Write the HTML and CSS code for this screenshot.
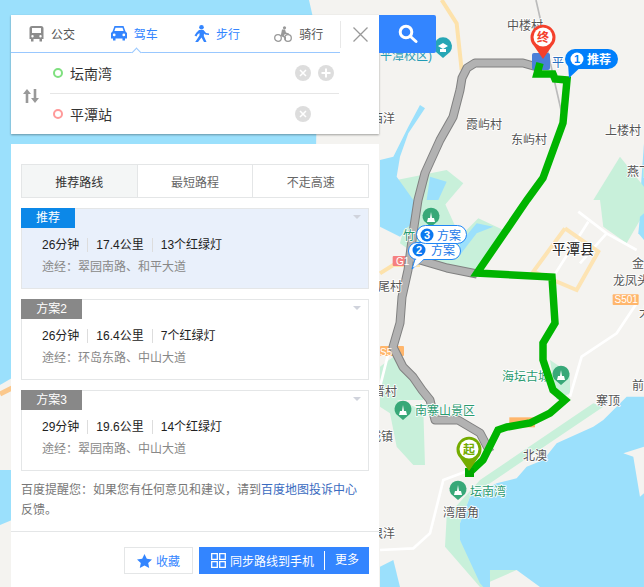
FILE: index.html
```html
<!DOCTYPE html>
<html lang="zh-CN">
<head>
    <meta charset="UTF-8">
    <title>百度地图 路线</title>
    <link rel="stylesheet" href="styles.css">
</head>
<body>
    <!-- Map canvas -->
    <svg class="map" width="644" height="587" viewBox="0 0 644 587">
        <rect width="644" height="587" fill="#f4f3f0"/>
        <!-- water left of the panel -->
        <path class="water" d="M0 0H309L318 40 316 150 300 210 0 385ZM0 470 11 465 60 500 0 525Z"/>
        <path class="land" d="M0 385 30 378 40 470 0 470Z"/>
        <path d="M0 394 12 388" stroke="#fbc88c" stroke-width="5" fill="none"/>

        <!-- upper map, zoom coords -->
        <g transform="translate(380,0) scale(.3333)">
            <path class="park" d="M50 540 200 510 250 550 190 620 110 620 60 600Z"/>
            <path class="water" d="M120 315 135 325 85 400 60 470 50 530 100 600 0 600 0 480 40 470 85 380Z"/>
            <path class="water" d="M150 530 200 545 175 600 140 600Z"/>
            <path class="water" d="M792 430 780 600 792 600Z"/>
            <path class="park" d="M720 470 792 560 792 600 640 600Z"/>
            <path class="road-peach" d="M185 0 230 70 245 210"/>
            <path class="rail" d="M468 0 550 360"/>
        </g>

        <!-- middle map, zoom coords -->
        <g transform="translate(380,200) scale(.3333)">
            <path class="water" d="M0 0H110L100 70 60 110 0 80Z"/>
            <path class="park" d="M125 0H190L240 110 295 55 370 90 290 210 130 180 60 130 70 90 100 70Z"/>
            <path class="water" d="M240 130 290 70 340 80 290 100 240 165Z"/>
            <path class="park" d="M660 0H792V40L740 130 670 80Z"/>
            <path class="water" d="M780 50 792 40V120L775 100Z"/>
            <path class="park" d="M0 500 40 470 130 590V600H0Z"/>
            <path class="park" d="M510 480 570 520 570 580 530 600Z"/>
            <path class="road-white" d="M595 35 680 100 770 150M625 65 520 230M680 100 600 190M770 310 710 400 605 470 570 590M30 440 0 560"/>
            <path class="road-ring" d="M555 85 655 155 590 270 460 215 555 85"/>
            <path class="road-peach" d="M0 220 40 195 120 195"/>
            <rect x="38" y="168" width="58" height="30" rx="3" fill="#f58080"/>
            <rect x="698" y="283" width="78" height="32" rx="3" fill="#ffb66c"/>
            <rect x="0" y="438" width="72" height="30" rx="3" fill="#ffb66c"/>
        </g>

        <!-- lower map, zoom coords -->
        <g transform="translate(380,390) scale(.3333)">
            <path class="park" d="M0 30 50 30 130 60 135 225 100 225 50 170 30 70 0 50Z"/>
            <path class="park" d="M670 50 640 40 300 270 200 380 195 470 300 591 330 591 240 450 240 400 270 320Z"/>
            <path class="water" d="M792 20 740 20 670 90 640 110 530 160 490 210 440 230 410 265 350 280 270 320 240 400 240 450 300 580 310 591H792Z"/>
            <path class="land" d="M730 190 760 200 780 320 792 310V170ZM330 540 410 540 480 591H330Z"/>
            <path class="park" d="M330 540 410 540 330 575Z"/>
            <path class="water" d="M0 530 40 510 60 591H0Z"/>
            <path class="road-white" d="M270 240 190 270 150 430 100 475 0 480"/>
            <rect x="388" y="82" width="77" height="30" fill="#ffb66c"/>
        </g>

        <!-- alternative routes -->
        <path class="route-edge" d="M537 67 523 63H475L467 68 462 78 460 90 453 117 440 140 425 173 418 200 413 233 408 270 402 297 400 323 393 347 403 367 413 377 422 390 430 400 435 420H458L480 433 490 452"/>
        <path class="route-edge" d="M413 258 447 268 477 274"/>
        <path class="route-alt" d="M537 67 523 63H475L467 68 462 78 460 90 453 117 440 140 425 173 418 200 413 233 408 270 402 297 400 323 393 347 403 367 413 377 422 390 430 400 435 420H458L480 433 490 452"/>
        <path class="route-alt" d="M413 258 447 268 477 274"/>

        <!-- map labels -->
        <text class="lbl" x="507" y="30">中楼村</text>
        <text class="lbl" x="466" y="129">霞屿村</text>
        <text class="lbl" x="511" y="144">东屿村</text>
        <text class="lbl" x="605" y="135">上楼村</text>
        <text class="lbl" x="627" y="176">燕下</text>
        <text class="lbl" x="371" y="123">西洋</text>
        <text class="lbl" x="632" y="268">金</text>
        <text class="lbl" x="613" y="285">龙凤头</text>
        <text class="lbl" x="639" y="317">大</text>
        <text class="lbl" x="632" y="390">前</text>
        <text class="lbl" x="596" y="405">寨顶</text>
        <text class="lbl" x="523" y="460">北澳</text>
        <text class="lbl" x="443" y="517">湾厝角</text>
        <text class="lbl" x="369" y="441">城镇</text>
        <text class="lbl" x="371" y="538">垠洋</text>
        <text class="lbl" x="373" y="396">晋村</text>
        <text class="lbl" x="366" y="291">黑尾村</text>
        <text class="lbl-city" x="552" y="254">平潭县</text>
        <text class="lbl-poi" x="502" y="381">海坛古城</text>
        <text class="lbl-poi" x="415" y="415">南寨山景区</text>
        <text class="lbl-poi" x="470" y="496">坛南湾</text>
        <text class="lbl-poi" x="403" y="240">竹</text>
        <text class="lbl-school" x="380" y="60">平潭校区)</text>
        <text class="lbl-blue" x="552" y="67">平</text>
        <text class="lbl-shield" x="614.500" y="303">S501</text>
        <text class="lbl-shield" x="380" y="356">S5</text>
        <text class="lbl-shield" x="396" y="265">G1</text>

        <!-- poi pins -->
        <g class="pin-green">
            <path d="M431 227 424 221A8.500 8.500 0 1 1 438 221Z"/>
            <path d="M561 385 554 379A8.500 8.500 0 1 1 568 379Z"/>
            <path d="M403 420 396 414A8.500 8.500 0 1 1 410 414Z"/>
            <path d="M458 500 451 494A8.500 8.500 0 1 1 465 494Z"/>
        </g>
        <g fill="#fff">
            <path d="M427 222H435L434 218H432L431 212 430 218H428Z"/>
            <path d="M557 380H565L564 376H562L561 370 560 376H558Z"/>
            <path d="M399 415H407L406 411H404L403 405 402 411H400Z"/>
            <path d="M454 495H462L461 491H459L458 485 457 491H455Z"/>
        </g>
        <path d="M443 58 436 52A9 9 0 1 1 450 52Z" fill="#26a6b5"/>
        <path d="M438 46 443 43 448 46 443 49ZM440 49H446V52H440Z" fill="#fff"/>

        <!-- subway stop under the end pin -->
        <rect x="532" y="53" width="18" height="17" rx="2" fill="#4a7fd8"/>

        <!-- main route -->
        <path class="route-main" d="M469 473 483 460 498 430 507 427 530 423 550 413 565 400 553 390 543 360V343L555 323 552 277 477 273 527 200 543 178 563 123 567 80 555 79 553 74 537 74 540 63"/>
        <rect x="465" y="468" width="9" height="9" fill="#00a800"/>

        <!-- start and end pins -->
        <path d="M469 471 460 458A12.500 12.500 0 1 1 478 458Z" fill="#74ac00"/>
        <circle cx="469" cy="449" r="9.500" fill="#fff"/>
        <text class="pin-text pin-start" x="469" y="454">起</text>
        <path d="M543 59 534 46A12.500 12.500 0 1 1 552 46Z" fill="#f4402c"/>
        <circle cx="543" cy="37" r="9.500" fill="#fff"/>
        <text class="pin-text pin-end" x="543" y="42">终</text>

        <!-- route badges -->
        <path d="M412 269 416 256H428Z" fill="#fff" stroke="#1f86f5"/>
        <rect x="408.500" y="242.500" width="52" height="17" rx="8.500" fill="#fff" stroke="#1f86f5"/>
        <path d="M414 268 417 256H427Z" fill="#fff"/>
        <circle cx="419" cy="250" r="6.500" fill="#0a78f0"/>
        <text class="badge-num" x="419" y="254">2</text>
        <text class="badge-txt" x="431" y="255">方案</text>
        <rect x="416.500" y="225.500" width="50" height="18" rx="9" fill="#fff" stroke="#1f86f5"/>
        <circle cx="427" cy="235" r="6.500" fill="#0a78f0"/>
        <text class="badge-num" x="427" y="239">3</text>
        <text class="badge-txt" x="437" y="240">方案</text>

        <path d="M569 78 568 64H584Z" fill="#007ffb"/>
        <rect x="565" y="49" width="53" height="20" rx="10" fill="#007ffb"/>
        <circle cx="577" cy="59" r="6.500" fill="#fff"/>
        <text class="badge-num badge-num-main" x="577" y="63">1</text>
        <text class="badge-txt badge-txt-main" x="587" y="64">推荐</text>
    </svg>

    <div class="side">
        <!-- Search box -->
        <div class="search">
            <div class="search-card">
                <div class="mode-bar">
                    <div class="modes">
                        <div class="mode">
                            <svg width="15" height="16" viewBox="0 0 15 16"><path fill="#8c8c8c" fill-rule="evenodd" d="M3 0H12A2.500 2.500 0 0 1 14.500 2.500V13H13V15.500H10.500V13H4.500V15.500H2V13H.500V2.500A2.500 2.500 0 0 1 3 0ZM3 2V7H12V2ZM3.500 9A1.200 1.200 0 1 0 3.500 11.400 1.200 1.200 0 0 0 3.500 9ZM11.500 9A1.200 1.200 0 1 0 11.500 11.400 1.200 1.200 0 0 0 11.500 9Z"/></svg>
                            <span>公交</span>
                        </div>
                        <div class="mode active">
                            <svg width="16" height="15" viewBox="0 0 16 15"><path fill="#3385ff" fill-rule="evenodd" d="M3.500 0H12.500L14.500 5.500 16 7V12.500H14V14.500H11.500V12.500H4.500V14.500H2V12.500H0V7L1.500 5.500ZM4.500 1.800 3.400 5H12.600L11.500 1.800ZM3.200 7.500A1.400 1.400 0 1 0 3.200 10.300 1.400 1.400 0 0 0 3.200 7.500ZM12.800 7.500A1.400 1.400 0 1 0 12.800 10.300 1.400 1.400 0 0 0 12.800 7.500Z"/></svg>
                            <span>驾车</span>
                        </div>
                        <div class="mode active">
                            <svg width="16" height="17" viewBox="0 0 16 17"><circle cx="8.500" cy="2.300" r="2.300" fill="#3385ff"/><path fill="#3385ff" d="M6 5H10.500L13 8 16 8.500V10L12 9.500 11 8.500 10.800 11 13.500 17H11L8.500 12.500 5 17H2.200L6.500 10.500V8L4.500 9.500 3.500 11.500 1.500 10.500 3.500 7.500Z"/></svg>
                            <span>步行</span>
                        </div>
                        <div class="mode">
                            <svg width="18" height="16" viewBox="0 0 18 16"><g fill="none" stroke="#999" stroke-width="1.300"><circle cx="4" cy="12" r="3.300"/><circle cx="14" cy="12" r="3.300"/></g><circle cx="10.500" cy="1.800" r="1.600" fill="#999"/><path fill="#999" d="M8 3.500H11L12 6.500 15 7.500V8.800L11 8 9.800 9.500 12 11V14H10.800V12L7 10V8.500Z"/></svg>
                            <span>骑行</span>
                        </div>
                        <i class="mode-notch"></i>
                    </div>
                    <div class="close">
                        <svg width="15" height="15" viewBox="0 0 15 15"><path d="M.5.500 14.500 14.500M14.500.500.5 14.500" stroke="#999" stroke-width="1.300" fill="none"/></svg>
                    </div>
                </div>
                <div class="route-form">
                    <div class="swap">
                        <svg width="16" height="14" viewBox="0 0 16 14"><path fill="#999" d="M4 0 8 5H5.300V14H2.700V5H0ZM12 14 8 9H10.700V0H13.300V9H16Z"/></svg>
                    </div>
                    <div class="fields">
                        <div class="field">
                            <i class="dot dot-start"></i>
                            <span class="field-text">坛南湾</span>
                            <svg class="clear" width="16" height="16" viewBox="0 0 16 16"><circle cx="8" cy="8" r="8" fill="#ddd"/><path d="M5 5 11 11M11 5 5 11" stroke="#fff" stroke-width="1.500"/></svg>
                            <svg width="16" height="16" viewBox="0 0 16 16"><circle cx="8" cy="8" r="8" fill="#ddd"/><path d="M8 3.500V12.500M3.500 8H12.500" stroke="#fff" stroke-width="2"/></svg>
                        </div>
                        <div class="field">
                            <i class="dot dot-end"></i>
                            <span class="field-text">平潭站</span>
                            <svg class="clear clear-last" width="16" height="16" viewBox="0 0 16 16"><circle cx="8" cy="8" r="8" fill="#ddd"/><path d="M5 5 11 11M11 5 5 11" stroke="#fff" stroke-width="1.500"/></svg>
                        </div>
                    </div>
                </div>
            </div>
            <div class="search-btn">
                <svg width="20" height="20" viewBox="0 0 20 20"><circle cx="8" cy="8" r="5.800" fill="none" stroke="#fff" stroke-width="3"/><path d="M12.500 12.500 18 17.500" stroke="#fff" stroke-width="3" stroke-linecap="round"/></svg>
            </div>
        </div>

        <!-- Route results -->
        <div class="results">
            <div class="sort-tabs">
                <div class="sort-tab current">推荐路线</div>
                <div class="sort-tab">最短路程</div>
                <div class="sort-tab">不走高速</div>
            </div>

            <div class="plan selected">
                <div class="plan-tag tag-main">推荐</div>
                <i class="plan-arrow"></i>
                <div class="plan-stats">
                    <span class="stat">26分钟</span>
                    <span class="stat">17.4公里</span>
                    <span class="stat">13个红绿灯</span>
                </div>
                <div class="plan-via">途经：翠园南路、和平大道</div>
            </div>

            <div class="plan">
                <div class="plan-tag">方案2</div>
                <i class="plan-arrow"></i>
                <div class="plan-stats">
                    <span class="stat">26分钟</span>
                    <span class="stat">16.4公里</span>
                    <span class="stat">7个红绿灯</span>
                </div>
                <div class="plan-via">途经：环岛东路、中山大道</div>
            </div>

            <div class="plan">
                <div class="plan-tag">方案3</div>
                <i class="plan-arrow"></i>
                <div class="plan-stats">
                    <span class="stat">29分钟</span>
                    <span class="stat">19.6公里</span>
                    <span class="stat">14个红绿灯</span>
                </div>
                <div class="plan-via">途经：翠园南路、中山大道</div>
            </div>

            <p class="tips">百度提醒您：如果您有任何意见和建议，请到<a class="tips-link">百度地图投诉中心</a>反馈。</p>

            <div class="actions">
                <div class="btn-fav">
                    <svg width="15" height="14" viewBox="0 0 15 14"><path fill="#3385ff" d="M7.500 0 9.800 4.800 15 5.400 11.200 9 12.200 14 7.500 11.500 2.800 14 3.800 9 0 5.400 5.200 4.800Z"/></svg>
                    <span>收藏</span>
                </div>
                <div class="btn-sync">
                    <svg width="15" height="15" viewBox="0 0 15 15"><path fill="none" stroke="#fff" stroke-width="1.300" d="M.7.700H6.300V6.300H.7ZM8.700.700H14.300V6.300H8.700ZM.7 8.700H6.300V14.300H.7ZM8.700 8.700H14.300V14.300H8.700Z"/></svg>
                    <span class="sync-text">同步路线到手机</span>
                    <span class="sync-more">更多</span>
                </div>
            </div>
        </div>
    </div>
</body>
</html>
```

FILE: styles.css
```css
html, body {
    margin: 0;
    height: 100%;
    overflow: hidden;
}
body {
    position: relative;
    width: 644px;
    height: 587px;
    font-family: "Liberation Sans", "Noto Sans CJK SC", sans-serif;
    font-size: 12px;
    color: #333;
}

/* map */
.map {
    position: absolute;
    left: 0;
    top: 0;
    font-family: "Liberation Sans", "Noto Sans CJK SC", sans-serif;
}
.water { fill: #9be0fc; }
.land { fill: #f4f3f0; }
.park { fill: #c8f0da; }
.road-peach { fill: none; stroke: #fde2ab; stroke-width: 12; }
.road-ring { fill: none; stroke: #fde4b4; stroke-width: 12; }
.road-white { fill: none; stroke: #fff; stroke-width: 8; }
.rail { fill: none; stroke: #bbb; stroke-width: 5; }
.route-edge { fill: none; stroke: #808080; stroke-width: 9; stroke-linejoin: round; }
.route-alt { fill: none; stroke: #b2b2b2; stroke-width: 7; stroke-linejoin: round; }
.route-main { fill: none; stroke: #00b400; stroke-width: 7.500; stroke-linejoin: miter; stroke-miterlimit: 3; }
.pin-green { fill: #38a878; }

.lbl { font-size: 12px; fill: #555; stroke: #fff; stroke-width: 1.500px; paint-order: stroke; }
.lbl-city { font-size: 14px; fill: #222; stroke: #fff; stroke-width: 2px; paint-order: stroke; }
.lbl-poi { font-size: 12px; fill: #2a9a70; stroke: #fff; stroke-width: 1.500px; paint-order: stroke; }
.lbl-school { font-size: 12px; fill: #1f9bb5; }
.lbl-blue { font-size: 12px; fill: #2a6fc0; stroke: #fff; stroke-width: 2px; paint-order: stroke; }
.lbl-shield { font-size: 10px; fill: #fff; }

.pin-text { font-size: 12px; font-weight: bold; text-anchor: middle; }
.pin-start { fill: #74ac00; }
.pin-end { fill: #f4402c; }
.badge-num { font-size: 11px; font-weight: bold; fill: #fff; text-anchor: middle; }
.badge-num-main { fill: #007ffb; }
.badge-txt { font-size: 12px; fill: #1a78e8; }
.badge-txt-main { fill: #fff; font-weight: bold; }

/* left column */
.side {
    position: absolute;
    left: 11px;
    top: 15px;
    bottom: 0;
    width: 368px;
    display: flex;
    flex-direction: column;
    gap: 10px;
}

/* search box */
.search {
    position: relative;
}
.search-card {
    background: #fff;
    box-shadow: 0 1px 2px rgba(0, 0, 0, .35);
}
.search-btn {
    position: absolute;
    left: 368px;
    top: 0;
    width: 57px;
    height: 38px;
    background: #3385ff;
    border-radius: 0 2px 2px 0;
    display: flex;
    align-items: center;
    justify-content: center;
}
.mode-bar {
    display: flex;
}
.modes {
    position: relative;
    width: 329px;
    height: 37px;
    display: flex;
    border-bottom: 1px solid #99c8ff;
}
.mode {
    flex: 1;
    display: flex;
    align-items: center;
    justify-content: center;
    gap: 7px;
    color: #555;
}
.mode.active {
    color: #3385ff;
}
.mode-notch {
    position: absolute;
    left: 122px;
    bottom: -4px;
    width: 6px;
    height: 6px;
    background: #fff;
    border-left: 1px solid #99c8ff;
    border-top: 1px solid #99c8ff;
    transform: rotate(45deg);
}
.close {
    flex: 1;
    display: flex;
    align-items: center;
    justify-content: center;
    margin: 6px 0 5px;
    border-left: 1px solid #e8e8e8;
}
.route-form {
    display: flex;
    height: 81px;
}
.swap {
    width: 39px;
    padding-top: 4px;
    box-sizing: border-box;
    display: flex;
    align-items: center;
    justify-content: center;
}
.fields {
    width: 289px;
}
.field {
    height: 40px;
    display: flex;
    align-items: center;
    padding-right: 5px;
    gap: 7px;
}
.field:first-child {
    border-bottom: 1px solid #e6e6e6;
}
.dot {
    width: 6px;
    height: 6px;
    margin-left: 3px;
    border-radius: 50%;
    border: 2px solid;
}
.dot-start { border-color: #7fe07f; }
.dot-end { border-color: #ff9a9a; }
.field-text {
    flex: 1;
    font-size: 14px;
    color: #333;
}
.clear-last {
    margin-right: 23px;
}

/* results */
.results {
    flex: 1;
    background: #fff;
    padding: 20px 10px 0;
    display: flex;
    flex-direction: column;
}
.sort-tabs {
    display: flex;
    height: 34px;
    box-sizing: border-box;
    border: 1px solid #e4e6e7;
    margin-bottom: 10px;
}
.sort-tab {
    flex: 1;
    display: flex;
    align-items: center;
    justify-content: center;
    color: #666;
    border-right: 1px solid #e4e6e7;
}
.sort-tab:last-child {
    border-right: 0;
}
.sort-tab.current {
    background: #f4f6f6;
    color: #333;
}
.plan {
    position: relative;
    height: 81px;
    box-sizing: border-box;
    border: 1px solid #e4e6e7;
    margin-bottom: 10px;
}
.plan.selected {
    background: #e9f0fb;
}
.plan-tag {
    width: 61px;
    height: 20px;
    margin: -1px 0 0 -1px;
    background: #888;
    color: #fff;
    font-size: 12px;
    line-height: 20px;
    text-align: center;
}
.plan-tag.tag-main {
    width: 54px;
    background: #0c88e8;
}
.plan-arrow {
    position: absolute;
    right: 7px;
    top: 6px;
    border-style: solid;
    border-width: 4px 4px 0;
    border-color: #d0d3dc transparent transparent;
}
.plan-stats {
    display: flex;
    align-items: center;
    height: 20px;
    margin: 7px 0 2px 20px;
    color: #222;
}
.stat {
    line-height: 14px;
}
.stat + .stat {
    margin-left: 8px;
    padding-left: 8px;
    border-left: 1px solid #ddd;
}
.plan-via {
    margin-left: 20px;
    line-height: 20px;
    color: #888;
}
.tips {
    margin: -1px 0 0;
    line-height: 20px;
    color: #777;
}
.tips-link {
    color: #3a6bc0;
}
.actions {
    margin: 11px -10px 0;
    padding: 15px 10px 0;
    border-top: 1px solid #e4e6e7;
    display: flex;
    justify-content: flex-end;
    gap: 6px;
}
.btn-fav {
    width: 69px;
    height: 27px;
    box-sizing: border-box;
    border: 1px solid #e4e6e7;
    display: flex;
    align-items: center;
    justify-content: center;
    gap: 4px;
    color: #3385ff;
}
.btn-sync {
    width: 170px;
    height: 27px;
    background: #3385ff;
    color: #fff;
    display: flex;
    align-items: center;
    padding-left: 12px;
    box-sizing: border-box;
}
.sync-text {
    margin-left: 4px;
}
.sync-more {
    margin-left: 10px;
    padding-left: 10px;
    border-left: 1px solid #fff;
    line-height: 19px;
}
```
